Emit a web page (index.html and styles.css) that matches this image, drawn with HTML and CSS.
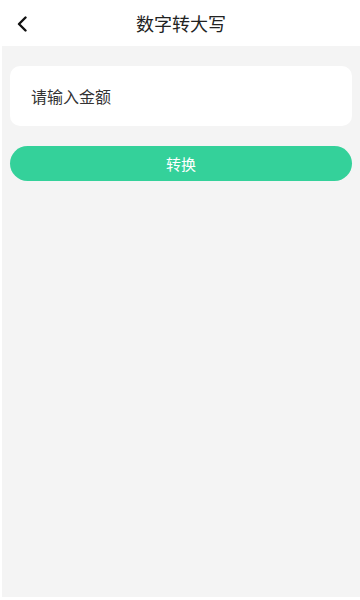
FILE: index.html
```html
<!DOCTYPE html>
<html lang="zh">
<head>
<meta charset="utf-8">
<link rel="stylesheet" href="styles.css">
</head>
<body>
<div class="page">
  <header class="topbar">
    <span class="back">
      <svg width="12" height="16" viewBox="0 0 12 16"><path d="M9.5 1.5 L3 8 L9.5 14.5" fill="none" stroke="#111" stroke-width="2.4" stroke-linecap="round" stroke-linejoin="round"/></svg>
    </span>
    <h1 class="title">数字转大写</h1>
  </header>
  <main class="content">
    <div class="card">
      <span class="placeholder">请输入金额</span>
    </div>
    <button class="btn">转换</button>
  </main>
</div>
</body>
</html>
```
FILE: styles.css
```css
html, body {
  margin: 0;
  padding: 0;
  background: #fff;
  font-family: "Noto Sans CJK SC", "Noto Sans", sans-serif;
}
.page {
  width: 360px;
  height: 600px;
  display: flex;
  flex-direction: column;
}
.topbar {
  height: 46px;
  position: relative;
  display: flex;
  align-items: center;
  justify-content: center;
  background: #fff;
}
.back {
  position: absolute;
  left: 16px;
  top: 16px;
  width: 12px;
  height: 16px;
  display: flex;
}
.title {
  margin: 0;
  font-size: 18px;
  font-weight: 400;
  color: #222;
  line-height: 1;
  padding-left: 2px;
}
.content {
  flex: 1;
  margin: 0 0 3px 2px;
  background: #f4f4f4;
  padding: 20px 8px 0 8px;
  display: flex;
  flex-direction: column;
  gap: 20px;
}
.card {
  height: 60px;
  background: #fff;
  border-radius: 10px;
  display: flex;
  align-items: center;
  padding-left: 21px;
}
.placeholder {
  font-size: 16px;
  color: #333;
}
.btn {
  height: 35px;
  border: none;
  border-radius: 18px;
  background: #34d19a;
  color: #fff;
  font-family: inherit;
  font-size: 15px;
  padding: 0;
}
```
